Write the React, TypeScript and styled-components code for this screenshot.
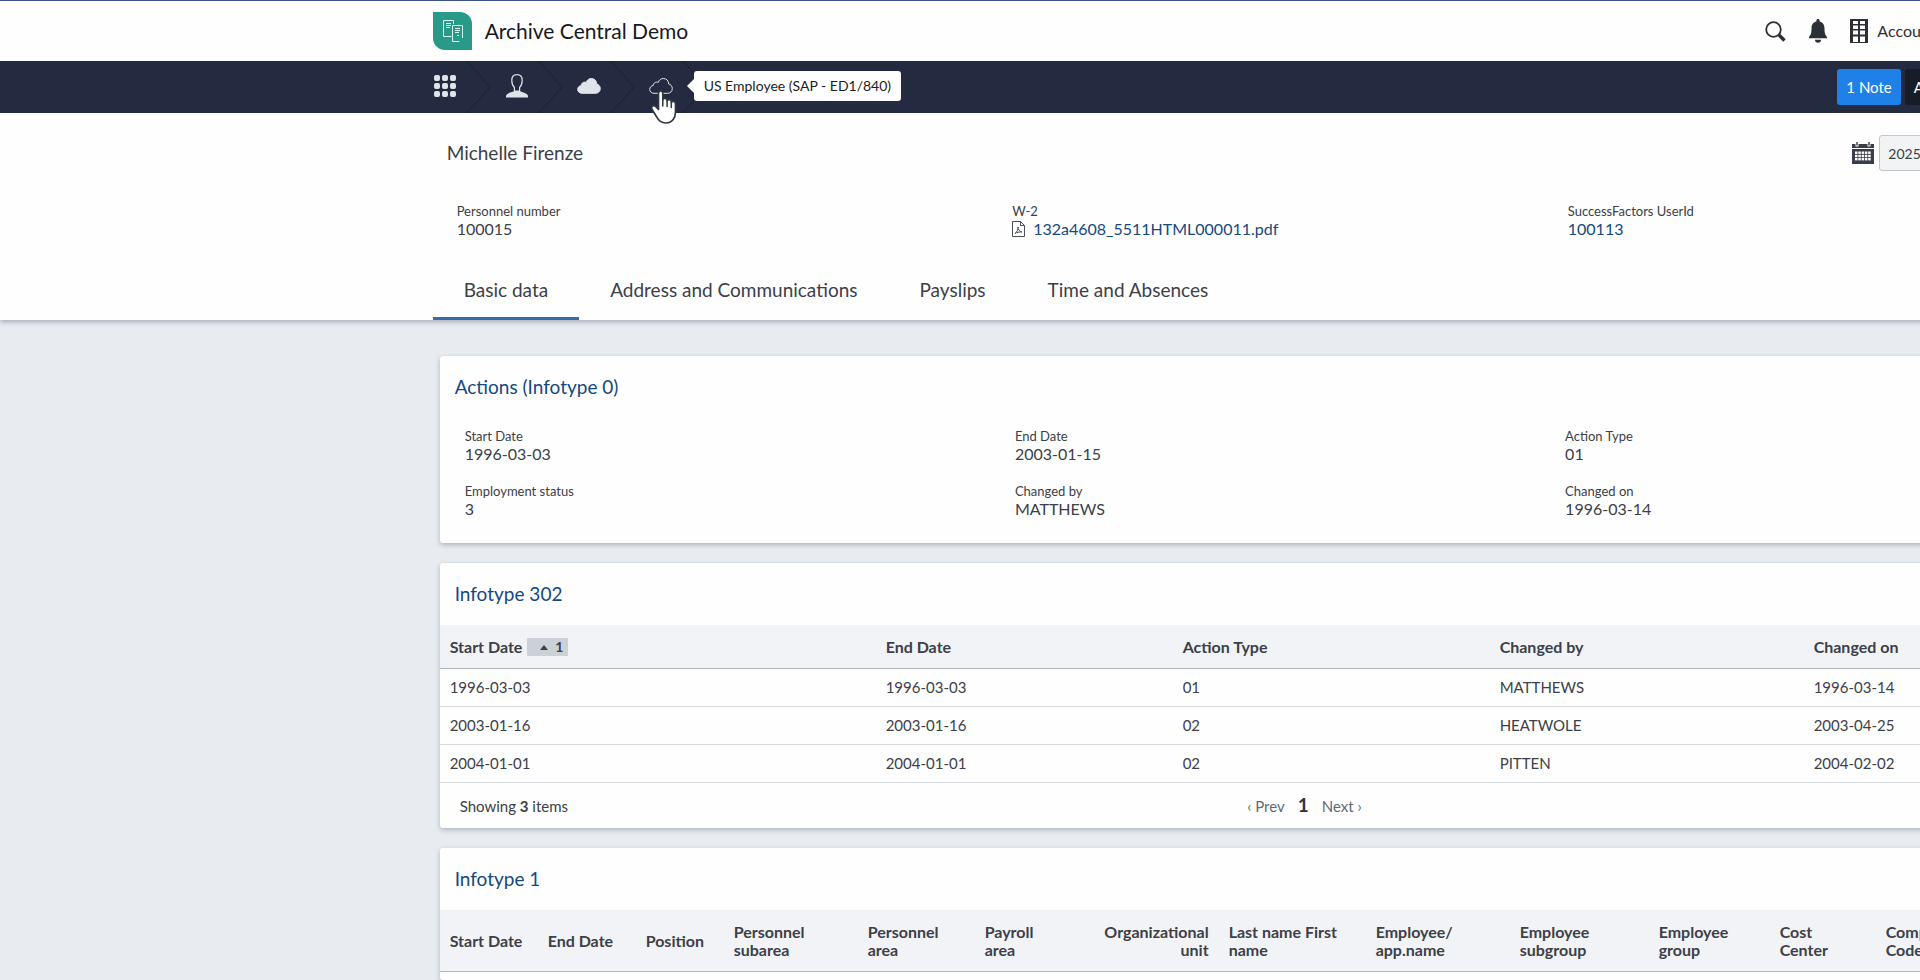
import React from "react";
import styled, { createGlobalStyle } from "styled-components";

const GlobalStyle = createGlobalStyle`
  *, *::before, *::after { box-sizing: border-box; }
  body {
    margin: 0;
    background: #e8ecf1;
    color: #3c4048;
    font-family: Lato, "Open Sans", sans-serif;
    font-size: 15px;
    line-height: 18px;
  }
  button, input { font: inherit; color: inherit; }
  h1, h2, p, dl, dd { margin: 0; font-weight: 400; }
`;

const Page = styled.div`
  overflow: hidden;
`;

/* The record view is wider than the window; what does not fit is clipped. */
const Canvas = styled.div`
  display: flex;
  flex-direction: column;
  width: 133.3333%;
  min-height: 100vh;
`;

const Container = styled.div`
  width: 66.2%;
  margin: 0 auto;
`;

const TopBar = styled.header`
  height: 61px;
  background: #fefefe;
  border-top: 1px solid #3c5286;
`;

const TopInner = styled(Container)`
  display: flex;
  align-items: center;
  height: 60px;
`;

const Logo = styled.svg`
  width: 39px;
  height: 38px;
  margin-right: 13px;
`;

const AppTitle = styled.h1`
  color: #17191f;
  font-size: 21px;
  line-height: 24px;
`;

const RightGroup = styled.div<{ $width: number; $gap: number }>`
  display: flex;
  align-items: center;
  flex: 0 0 ${(p) => p.$width}px;
  gap: ${(p) => p.$gap}px;
  margin-left: auto;
`;

const PlainButton = styled.button`
  display: flex;
  align-items: center;
  gap: 9px;
  padding: 0;
  border: 0;
  background: none;
  color: #2d2f38;
  font-size: 16px;
  cursor: pointer;
`;

const NavBar = styled.nav`
  position: relative;
  z-index: 1;
  background: #242a3f;
`;

const NavInner = styled(Container)`
  display: flex;
  align-items: center;
  height: 52px;
`;

const Crumb = styled.div`
  position: relative;
  display: flex;
  align-items: center;
  gap: 10px;
  width: 72px;
`;

const CrumbButton = styled(PlainButton)`
  width: 24px;
  height: 52px;
  padding-bottom: 2px;
  color: #dfe4ea;
`;

const Chevron = styled.svg`
  width: 24px;
  height: 52px;
`;

const Tooltip = styled.div`
  position: absolute;
  left: 45px;
  top: 10px;
  padding: 6px 10px;
  border-radius: 3px;
  background: #fff;
  color: #1b1d24;
  font-size: 14px;
  white-space: nowrap;

  &::before {
    content: "";
    position: absolute;
    top: 8px;
    right: 100%;
    border: 7px solid transparent;
    border-left-width: 0;
    border-right-color: #fff;
  }
`;

const Pointer = styled.svg`
  position: absolute;
  left: 1px;
  top: 28px;
  width: 28px;
  height: 36px;
  pointer-events: none;
`;

const NoteButton = styled.button<{ $dark?: boolean }>`
  height: 36px;
  padding: 0 9px;
  border: 0;
  border-radius: 3px;
  background: ${(p) => (p.$dark ? "#181b28" : "#1f80e8")};
  color: #fff;
  font-size: 15px;
  white-space: nowrap;
  cursor: pointer;
`;

const RecordHeader = styled.section`
  position: relative;
  background: #fefefe;
  box-shadow: 0 2px 5px rgba(40, 50, 70, 0.35);
`;

const RecordInner = styled(Container)`
  padding-top: 22px;
`;

const NameRow = styled.div`
  display: flex;
  align-items: center;
  height: 36px;
  margin-bottom: 31px;
  padding-left: 14px;
`;

const RecordName = styled.h2`
  font-size: 19px;
  line-height: 24px;
`;

const DateInput = styled.input`
  width: 120px;
  height: 36px;
  padding: 0 8px;
  border: 1px solid #c3c6cb;
  border-radius: 3px;
  background: #f2f3f5;
  font-size: 14px;
`;

const FieldGrid = styled.dl<{ $inCard?: boolean }>`
  display: grid;
  grid-template-columns: repeat(3, 1fr);
  row-gap: 19px;
  padding: ${(p) => (p.$inCard ? "9px 15px 25px" : "0 14px 25px")};
`;

const FieldBox = styled.div`
  padding: 0 10px;
`;

const FieldLabel = styled.dt`
  font-size: 13px;
`;

const FieldValue = styled.dd`
  display: flex;
  align-items: center;
  gap: 8px;
  height: 18px;
  font-size: 16px;
`;

const Link = styled.a`
  color: #14497f;
  text-decoration: none;
`;

const Tabs = styled.div`
  display: flex;
`;

const Tab = styled.button<{ $active?: boolean }>`
  padding: 15px 31px;
  border: 0;
  border-bottom: 3px solid ${(p) => (p.$active ? "#376ba9" : "transparent")};
  background: none;
  font-size: 19px;
  line-height: 24px;
  cursor: pointer;
`;

const Main = styled.main`
  display: flex;
  flex: 1;
`;

const CardStack = styled(Container)`
  display: flex;
  flex-direction: column;
  gap: 20px;
  padding: 36px 7px 0;
`;

const Card = styled.section`
  border-radius: 3px;
  background: #fefefe;
  box-shadow: 0 2px 5px rgba(40, 50, 70, 0.3);

  &:last-child { flex: 1; }
`;

const CardTitle = styled.h2`
  padding: 19px 15px;
  color: #14497f;
  font-size: 19px;
  line-height: 24px;
`;

const Table = styled.table`
  width: 100%;
  table-layout: fixed;
  border-spacing: 0;
`;

const Th = styled.th<{ $width?: number; $right?: boolean }>`
  width: ${(p) => (p.$width ? p.$width + "px" : "auto")};
  padding: 13px 10px 12px;
  border-bottom: 1px solid #b1b5bc;
  background: #f2f3f6;
  font-size: 16px;
  font-weight: 700;
  text-align: ${(p) => (p.$right ? "right" : "left")};
  white-space: pre-line;
`;

const Td = styled.td`
  padding: 9px 10px 10px;
  border-bottom: 1px solid #d6dadf;
`;

const SortBadge = styled.span`
  display: inline-flex;
  align-items: center;
  gap: 7px;
  height: 18px;
  margin-left: 5px;
  padding: 0 5px 0 13px;
  background: #cbd1d7;
  font-size: 14px;
  vertical-align: top;
`;

const TableFooter = styled.footer`
  display: flex;
  align-items: center;
  height: 45px;
  padding: 0 20px;
`;

const ItemCount = styled.p`
  flex: 0 0 48%;
`;

const Pager = styled.div`
  display: flex;
  align-items: baseline;
  gap: 13px;
`;

const PageButton = styled.button<{ $current?: boolean }>`
  padding: 0;
  border: 0;
  background: none;
  color: ${(p) => (p.$current ? "#2f333b" : "#626a75")};
  font-size: ${(p) => (p.$current ? 19 : 15)}px;
  font-weight: ${(p) => (p.$current ? 700 : 400)};
  cursor: pointer;
`;

type Field = { label: string; value: string; link?: boolean; file?: boolean };

const recordFields: Field[] = [
  { label: "Personnel number", value: "100015" },
  { label: "W-2", value: "132a4608_5511HTML000011.pdf", link: true, file: true },
  { label: "SuccessFactors UserId", value: "100113", link: true },
];

const actionFields: Field[] = [
  { label: "Start Date", value: "1996-03-03" },
  { label: "End Date", value: "2003-01-15" },
  { label: "Action Type", value: "01" },
  { label: "Employment status", value: "3" },
  { label: "Changed by", value: "MATTHEWS" },
  { label: "Changed on", value: "1996-03-14" },
];

const tabs = ["Basic data", "Address and Communications", "Payslips", "Time and Absences"];

const actionColumns = [
  { label: "Start Date", width: 436 },
  { label: "End Date", width: 297 },
  { label: "Action Type", width: 317 },
  { label: "Changed by", width: 314 },
  { label: "Changed on" },
];

const actionRows = [
  ["1996-03-03", "1996-03-03", "01", "MATTHEWS", "1996-03-14"],
  ["2003-01-16", "2003-01-16", "02", "HEATWOLE", "2003-04-25"],
  ["2004-01-01", "2004-01-01", "02", "PITTEN", "2004-02-02"],
];

const orgColumns = [
  { label: "Start Date", width: 98 },
  { label: "End Date", width: 98 },
  { label: "Position", width: 88 },
  { label: "Personnel\nsubarea", width: 134 },
  { label: "Personnel\narea", width: 117 },
  { label: "Payroll\narea", width: 98 },
  { label: "Organizational\nunit", width: 146, right: true },
  { label: "Last name First\nname", width: 147 },
  { label: "Employee/\napp.name", width: 144 },
  { label: "Employee\nsubgroup", width: 139 },
  { label: "Employee\ngroup", width: 121 },
  { label: "Cost\nCenter", width: 106 },
  { label: "Company\nCode" },
];

const LogoMark = () => (
  <Logo viewBox="0 0 39 38" aria-hidden="true">
    <path d="M0 0H27A12 12 0 0 1 39 12V38H12A12 12 0 0 1 0 26Z" fill="#2a9a88" />
    <g fill="none" stroke="#d9f4ef" strokeWidth="1">
      <path d="M18.500 24.500H10.500V8.500H20.500V12" />
      <path d="M19.500 13.500H29.500V26M26.500 29.500H19.500V13.500" />
      <path d="M13 11.500h5M13 13.500h5M13 15.500h4M22 16.500h5M22 18.500h5M22 20.500h4M24 23.500h2" />
    </g>
  </Logo>
);

const SearchIcon = () => (
  <svg width="21" height="21" viewBox="0 0 21 21" fill="none" stroke="#2d2f38">
    <circle cx="8.500" cy="8.500" r="7.300" strokeWidth="1.800" />
    <path d="M14 14l5.500 5.500" strokeWidth="3.400" />
  </svg>
);

const BellIcon = () => (
  <svg width="18" height="24" viewBox="0 0 18 24" fill="#2d2f38">
    <path d="M9 0c1 0 1.600.7 1.600 1.600v.9C14 3.200 15.500 6 15.500 9.500c0 5 .8 6.500 2.500 8.500v1.300H0V18c1.700-2 2.500-3.500 2.500-8.500C2.500 6 4 3.200 7.400 2.500v-.9C7.400.7 8 0 9 0Z" />
    <path d="M6 20.800h6A3 3 0 0 1 6 20.800Z" />
  </svg>
);

const BuildingIcon = () => (
  <svg width="18" height="24" viewBox="0 0 18 24">
    <path d="M0 0H18V24H0Z" fill="#2d2f38" />
    <path
      d="M3 2h5v3H3zM10 2h5v3h-5zM3 6.500h5v3.500H3zM10 6.500h5v3.500h-5zM3 11.500h5v4H3zM10 11.500h5v4h-5zM3 17.500h5V23H3zM10 17.500h5V23h-5z"
      fill="#fff"
    />
  </svg>
);

const GridIcon = () => (
  <svg width="24" height="24" viewBox="0 0 24 24" fill="currentColor">
    {[1, 9, 17].map((y) =>
      [1, 9, 17].map((x) => <rect key={x + "-" + y} x={x} y={y} width="6" height="6" rx="2" />)
    )}
  </svg>
);

const PersonIcon = () => (
  <svg width="24" height="24" viewBox="0 0 24 24">
    <path
      d="M12 .7c3.300 0 5.200 2.400 5.200 5.800 0 3-1 5.500-2.600 7v3.600H9.400v-3.600c-1.600-1.500-2.600-4-2.600-7C6.800 3.100 8.700.7 12 .7Z"
      fill="none"
      stroke="currentColor"
      strokeWidth="1.200"
    />
    <path d="M1 23.500v-1.700c1-2.800 5-3.300 8.400-4.800h5.200c3.400 1.500 7.400 2 8.400 4.800v1.700Z" fill="currentColor" />
  </svg>
);

const CloudIcon = ({ outline }: { outline?: boolean }) => (
  <svg width="24" height="24" viewBox="0 0 24 24">
    <path
      d="M5 19.300C2.400 19.300.7 17.600.7 15.400c0-2.100 1.500-3.700 3.600-3.900 0-2.800 3-4.100 4.900-3C10 5.900 12 4.500 14.300 4.500c3.200 0 5.400 2.300 5.300 5.400 2.100.5 3.700 2.300 3.700 4.700 0 2.700-2 4.700-4.600 4.700Z"
      fill={outline ? "none" : "currentColor"}
      stroke="currentColor"
      strokeWidth="1"
    />
  </svg>
);

const HandPointer = () => (
  <Pointer viewBox="0 0 28 36" aria-hidden="true">
    <path
      d="M8.500 4.200C8.500 1 12.800 1 12.800 4.200V11c.3-2.300 4-2.200 4.300.3v.7c.5-2 4-1.800 4.200.5v1c.8-1.900 4.200-1.400 4.200 1.200V23c0 6-3.500 11-9.700 11-5 0-7.400-2.600-9.300-6.300L2 20.300c-1.500-3 1.500-4.800 3.600-2.800l2.900 3Z"
      fill="#fff"
      stroke="#33363f"
      strokeWidth="1.700"
      strokeLinejoin="round"
    />
    <path d="M12.800 11v6M17.100 12v5.500M21.300 13.500v5" stroke="#33363f" strokeWidth="1.500" strokeLinecap="round" />
  </Pointer>
);

const CalendarIcon = () => (
  <svg width="22" height="22" viewBox="0 0 22 22">
    <path d="M0 2h3.500v2.500h3V2h9v2.500h3V2H22v4H0ZM0 7H22V22H0Z" fill="#3a3d49" />
    <path d="M4.300 0h1.400v3.500H4.300zM16.300 0h1.400v3.500h-1.400z" fill="#3a3d49" />
    {[9.500, 12.800, 16].map((y) =>
      [3, 6.300, 9.600, 12.900, 16.200].map((x) => (
        <rect key={x + "-" + y} x={x} y={y} width="2.500" height="2.400" fill="#fff" />
      ))
    )}
  </svg>
);

const PdfIcon = () => (
  <svg width="13" height="16" viewBox="0 0 13 16" fill="none" stroke="#4b4f58">
    <path d="M.5.500H8.500L12.500 4.500V15.500H.5ZM8.500.500V4.500H12.500" />
    <path d="M3 12.500c2-1.500 3.200-4 3-6.500 0 2.500 1.500 4.500 4 5-2.500-.2-5 .3-7 1.500Z" />
  </svg>
);

const CrumbDivider = () => (
  <Chevron viewBox="0 0 24 52" aria-hidden="true">
    <path d="M0 0L23 26L0 52" fill="none" stroke="#191d2b" strokeWidth="1" strokeDasharray="3 1" />
  </Chevron>
);

const Fields = ({ items, inCard }: { items: Field[]; inCard?: boolean }) => (
  <FieldGrid $inCard={inCard}>
    {items.map((f) => (
      <FieldBox key={f.label}>
        <FieldLabel>{f.label}</FieldLabel>
        <FieldValue>
          {f.file && <PdfIcon />}
          {f.link ? <Link href="#">{f.value}</Link> : f.value}
        </FieldValue>
      </FieldBox>
    ))}
  </FieldGrid>
);

export default function App() {
  return (
    <Page>
      <GlobalStyle />
      <Canvas>
        <TopBar>
          <TopInner>
            <LogoMark />
            <AppTitle>Archive Central Demo</AppTitle>
            <RightGroup $width={362} $gap={23}>
              <PlainButton aria-label="Search"><SearchIcon /></PlainButton>
              <PlainButton aria-label="Notifications"><BellIcon /></PlainButton>
              <PlainButton><BuildingIcon />Account</PlainButton>
            </RightGroup>
          </TopInner>
        </TopBar>

        <NavBar aria-label="Breadcrumb">
          <NavInner>
            <Crumb>
              <CrumbButton aria-label="Home"><GridIcon /></CrumbButton>
              <CrumbDivider />
            </Crumb>
            <Crumb>
              <CrumbButton aria-label="Person"><PersonIcon /></CrumbButton>
              <CrumbDivider />
            </Crumb>
            <Crumb>
              <CrumbButton aria-label="Cloud record"><CloudIcon /></CrumbButton>
              <CrumbDivider />
            </Crumb>
            <Crumb>
              <CrumbButton aria-describedby="crumb-tip" aria-label="Employee record"><CloudIcon outline /></CrumbButton>
              <CrumbDivider />
              <Tooltip id="crumb-tip" role="tooltip">US Employee (SAP - ED1/840)</Tooltip>
              <HandPointer />
            </Crumb>
            <RightGroup $width={290} $gap={4}>
              <NoteButton>1 Note</NoteButton>
              <NoteButton $dark>Actions</NoteButton>
            </RightGroup>
          </NavInner>
        </NavBar>

        <RecordHeader>
          <RecordInner>
            <NameRow>
              <RecordName>Michelle Firenze</RecordName>
              <RightGroup $width={275} $gap={5}>
                <CalendarIcon />
                <DateInput aria-label="Key date" defaultValue="2025-01-01" />
              </RightGroup>
            </NameRow>
            <Fields items={recordFields} />
            <Tabs role="tablist">
              {tabs.map((t, i) => (
                <Tab key={t} role="tab" aria-selected={i === 0} $active={i === 0}>{t}</Tab>
              ))}
            </Tabs>
          </RecordInner>
        </RecordHeader>

        <Main>
          <CardStack>
            <Card>
              <CardTitle>Actions (Infotype 0)</CardTitle>
              <Fields items={actionFields} inCard />
            </Card>

            <Card>
              <CardTitle>Infotype 302</CardTitle>
              <Table>
                <thead>
                  <tr>
                    {actionColumns.map((c, i) => (
                      <Th key={c.label} scope="col" $width={c.width}>
                        {c.label}
                        {i === 0 && (
                          <SortBadge>
                            <svg width="8" height="5" viewBox="0 0 8 5"><path d="M0 5L4 0L8 5Z" fill="#3c4048" /></svg>
                            1
                          </SortBadge>
                        )}
                      </Th>
                    ))}
                  </tr>
                </thead>
                <tbody>
                  {actionRows.map((r) => (
                    <tr key={r[0]}>{r.map((v, i) => <Td key={i}>{v}</Td>)}</tr>
                  ))}
                </tbody>
              </Table>
              <TableFooter>
                <ItemCount>Showing <b>3</b> items</ItemCount>
                <Pager>
                  <PageButton>‹ Prev</PageButton>
                  <PageButton $current>1</PageButton>
                  <PageButton>Next ›</PageButton>
                </Pager>
              </TableFooter>
            </Card>

            <Card>
              <CardTitle>Infotype 1</CardTitle>
              <Table>
                <thead>
                  <tr>
                    {orgColumns.map((c) => (
                      <Th key={c.label} scope="col" $width={c.width} $right={c.right}>{c.label}</Th>
                    ))}
                  </tr>
                </thead>
              </Table>
            </Card>
          </CardStack>
        </Main>
      </Canvas>
    </Page>
  );
}
